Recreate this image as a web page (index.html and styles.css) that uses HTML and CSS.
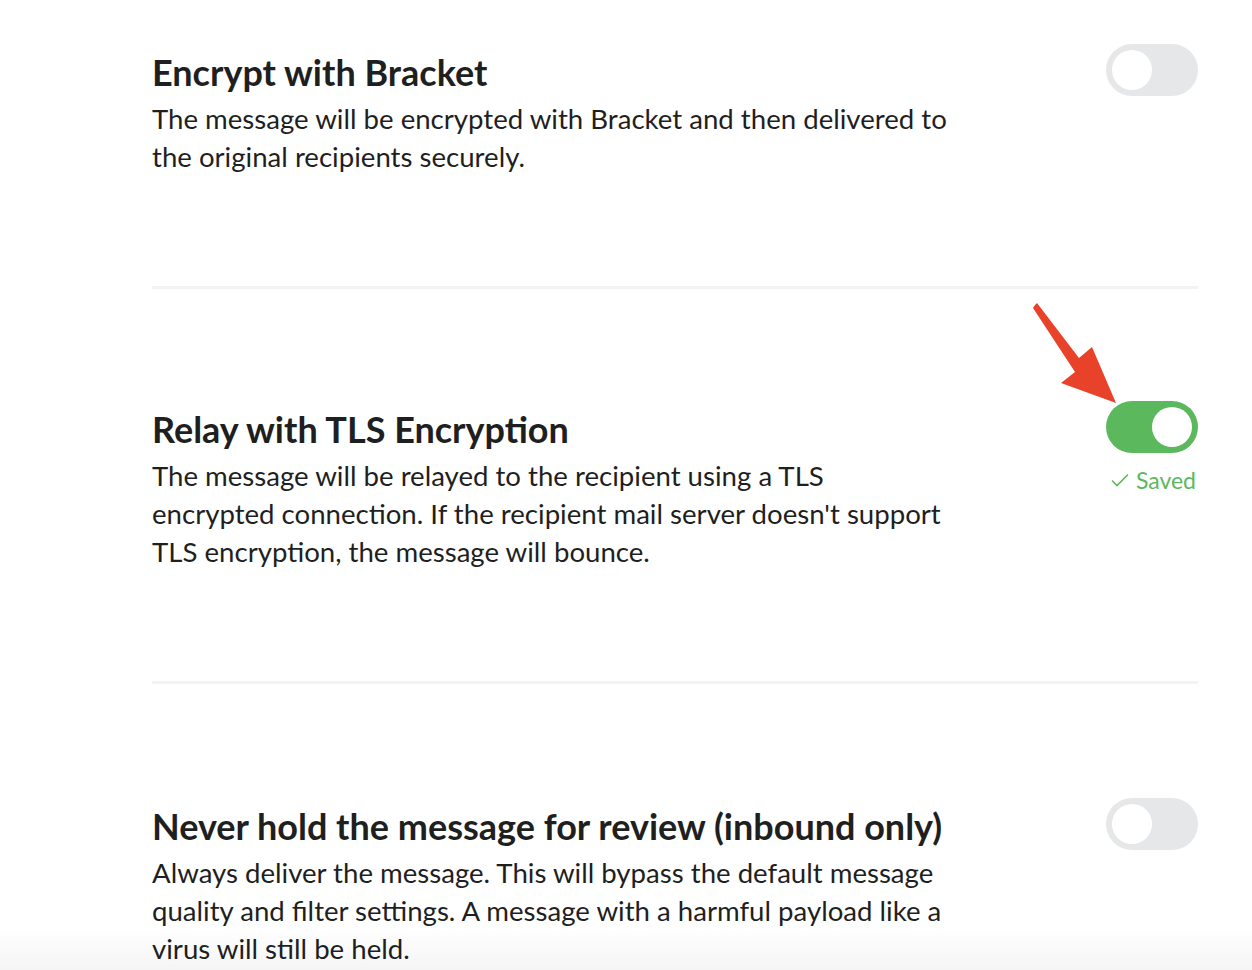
FILE: index.html
```html
<!DOCTYPE html>
<html lang="en">
<head>
    <meta charset="UTF-8">
    <meta name="viewport" content="width=device-width, initial-scale=1.0">
    <title>Delivery settings</title>
    <link rel="stylesheet" href="styles.css">
</head>
<body>
    <div class="settings">
        <!-- Encrypt -->
        <div class="setting">
            <div class="setting-text">
                <h2>Encrypt with Bracket</h2>
                <p>The message will be encrypted with Bracket and then delivered to the original recipients securely.</p>
            </div>
            <div class="setting-control">
                <span class="toggle"><span class="knob"></span></span>
            </div>
        </div>

        <!-- TLS -->
        <div class="setting">
            <div class="setting-text">
                <h2>Relay with TLS Encryption</h2>
                <p>The message will be relayed to the recipient using a TLS encrypted connection. If the recipient mail server doesn't support TLS encryption, the message will bounce.</p>
            </div>
            <div class="setting-control">
                <span class="toggle on"><span class="knob"></span></span>
                <span class="saved">
                    <svg width="20" height="16" viewBox="0 0 20 16"><path d="M2 8.5 L7 13.5 L18 2.5" fill="none" stroke="#5cb85c" stroke-width="1.6"/></svg>
                    Saved
                </span>
                <!-- annotation arrow -->
                <svg class="arrow" width="90" height="110" viewBox="0 0 90 110">
                    <path d="M3 2 L5 0 L47 55 L60 44 L84 100 L29 80 L43 69 L1 5 Z" fill="#e8432a"/>
                </svg>
            </div>
        </div>

        <!-- Hold -->
        <div class="setting">
            <div class="setting-text">
                <h2>Never hold the message for review (inbound only)</h2>
                <p>Always deliver the message. This will bypass the default message quality and filter settings. A message with a harmful payload like a virus will still be held.</p>
            </div>
            <div class="setting-control">
                <span class="toggle"><span class="knob"></span></span>
            </div>
        </div>
    </div>

    <div class="bottom-fade"></div>
</body>
</html>
```

FILE: styles.css
```css
body {
    margin: 0;
    background-color: #fff;
    color: #1f1f1f;
    font-family: 'Lato', 'Open Sans', sans-serif;
    overflow: hidden;
}
.settings {
    margin-left: 152px;
    width: 1046px;
}
.setting {
    display: flex;
    justify-content: space-between;
    align-items: flex-start;
    padding: 112px 0 110px;
    border-bottom: 3px solid #f3f3f4;
}
.setting:first-child {
    padding-top: 44px;
}
.setting:last-child {
    padding-top: 114px;
}
.setting-text {
    padding-top: 6px;
    width: 798px;
}
.setting-text h2 {
    margin: 0 0 6px;
    font-size: 36px;
    line-height: 44px;
    font-weight: 700;
}
.setting-text p {
    margin: 0;
    font-size: 27.6px;
    line-height: 38px;
    font-weight: 400;
}
.setting-control {
    position: relative;
    display: flex;
    flex-direction: column;
    align-items: flex-end;
}
.toggle {
    display: block;
    width: 92px;
    height: 52px;
    border-radius: 26px;
    background-color: #e6e7e8;
    position: relative;
}
.toggle .knob {
    position: absolute;
    top: 6px;
    left: 6px;
    width: 40px;
    height: 40px;
    border-radius: 50%;
    background-color: #fff;
}
.toggle.on {
    background-color: #5cb85c;
}
.toggle.on .knob {
    left: auto;
    right: 6px;
}
.saved {
    margin-top: 14px;
    margin-right: 2px;
    color: #5cb85c;
    font-size: 23px;
    line-height: 26px;
    display: flex;
    align-items: center;
    gap: 6px;
}
.arrow {
    position: absolute;
    left: -74px;
    top: -98px;
}
.bottom-fade {
    position: fixed;
    left: 0;
    right: 0;
    bottom: 0;
    height: 44px;
    background: linear-gradient(rgba(0, 0, 0, 0), rgba(0, 0, 0, 0.04));
    pointer-events: none;
}
```
